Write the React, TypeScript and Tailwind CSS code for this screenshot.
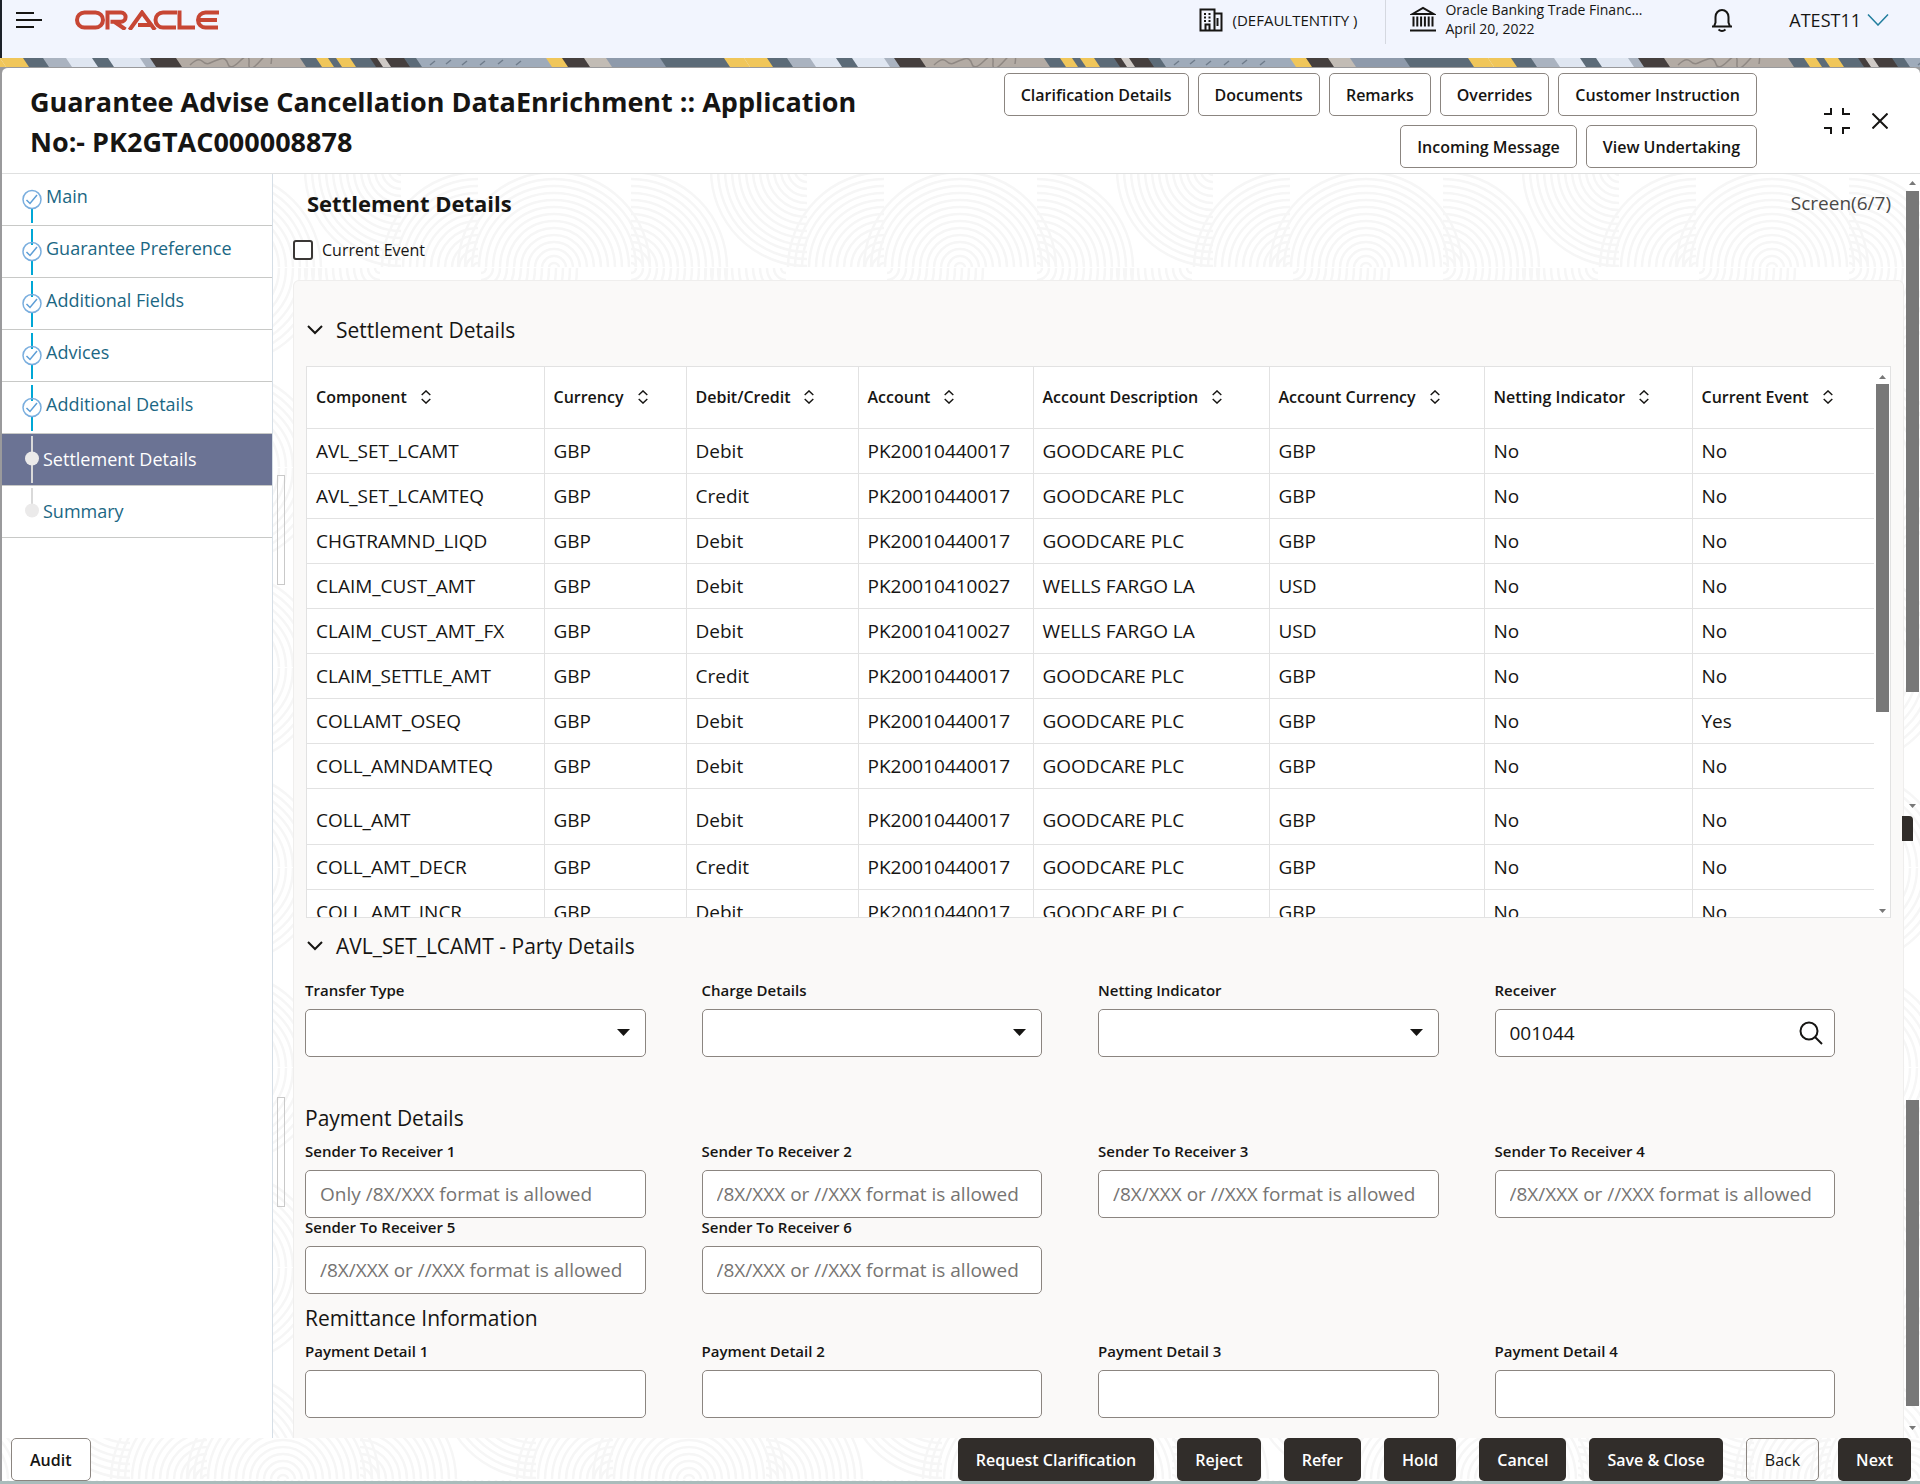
import React from 'react';

type StepState = 'done' | 'current' | 'todo';

interface Step {
  label: string;
  state: StepState;
}

const steps: Step[] = [
  { label: 'Main', state: 'done' },
  { label: 'Guarantee Preference', state: 'done' },
  { label: 'Additional Fields', state: 'done' },
  { label: 'Advices', state: 'done' },
  { label: 'Additional Details', state: 'done' },
  { label: 'Settlement Details', state: 'current' },
  { label: 'Summary', state: 'todo' },
];

const columns = [
  { label: 'Component', width: 'w-[237px]' },
  { label: 'Currency', width: 'w-[142px]' },
  { label: 'Debit/Credit', width: 'w-[172px]' },
  { label: 'Account', width: 'w-[175px]' },
  { label: 'Account Description', width: 'w-[236px]' },
  { label: 'Account Currency', width: 'w-[215px]' },
  { label: 'Netting Indicator', width: 'w-[208px]' },
  { label: 'Current Event', width: 'w-[183px]' },
];

const rows = [
  ['AVL_SET_LCAMT', 'GBP', 'Debit', 'PK20010440017', 'GOODCARE PLC', 'GBP', 'No', 'No'],
  ['AVL_SET_LCAMTEQ', 'GBP', 'Credit', 'PK20010440017', 'GOODCARE PLC', 'GBP', 'No', 'No'],
  ['CHGTRAMND_LIQD', 'GBP', 'Debit', 'PK20010440017', 'GOODCARE PLC', 'GBP', 'No', 'No'],
  ['CLAIM_CUST_AMT', 'GBP', 'Debit', 'PK20010410027', 'WELLS FARGO LA', 'USD', 'No', 'No'],
  ['CLAIM_CUST_AMT_FX', 'GBP', 'Debit', 'PK20010410027', 'WELLS FARGO LA', 'USD', 'No', 'No'],
  ['CLAIM_SETTLE_AMT', 'GBP', 'Credit', 'PK20010440017', 'GOODCARE PLC', 'GBP', 'No', 'No'],
  ['COLLAMT_OSEQ', 'GBP', 'Debit', 'PK20010440017', 'GOODCARE PLC', 'GBP', 'No', 'Yes'],
  ['COLL_AMNDAMTEQ', 'GBP', 'Debit', 'PK20010440017', 'GOODCARE PLC', 'GBP', 'No', 'No'],
  ['COLL_AMT', 'GBP', 'Debit', 'PK20010440017', 'GOODCARE PLC', 'GBP', 'No', 'No'],
  ['COLL_AMT_DECR', 'GBP', 'Credit', 'PK20010440017', 'GOODCARE PLC', 'GBP', 'No', 'No'],
  ['COLL_AMT_INCR', 'GBP', 'Debit', 'PK20010440017', 'GOODCARE PLC', 'GBP', 'No', 'No'],
];

const headerActions = [
  'Clarification Details',
  'Documents',
  'Remarks',
  'Overrides',
  'Customer Instruction',
  'Incoming Message',
  'View Undertaking',
];

const footerActions = ['Request Clarification', 'Reject', 'Refer', 'Hold', 'Cancel', 'Save & Close'];

const ANY_FORMAT = '/8X/XXX or //XXX format is allowed';

const radii = Array.from({ length: 14 }, (_, i) => 5 + i * 7);

// [centre x, centre y, clip x, clip y, clip width] of each set of rings in a 406x200 tile
const ringSets: [number, number, number, number, number][] = [
  [0, 100, 0, 0, 100],
  [406, 100, 306, 0, 100],
  [77, 100, 77, 0, 100],
  [253, 2, 153, 0, 100],
  [330, 100, 230, 0, 100],
  [333, 100, 333, 100, 73],
  [-73, 100, 0, 100, 30],
  [77, 100, 77, 100, 100],
  [232, 100, 150, 100, 82],
];

// Embossed arches that repeat behind the content and the footer
const Ripples: React.FC<{ id: string; top: number }> = ({ id, top }) => (
  <svg className="pointer-events-none absolute inset-0 h-full w-full" aria-hidden="true">
    <defs>
      {ringSets.map(([, , x, y, w], i) => (
        <clipPath key={i} id={`${id}-${i}`}>
          <rect x={x} y={y} width={w} height="99" />
        </clipPath>
      ))}
      <pattern id={id} width="406" height="200" x="281" y={top} patternUnits="userSpaceOnUse">
        <g fill="none" stroke="#f6f6f6" strokeWidth="2.5">
          {ringSets.map(([cx, cy], i) => (
            <g key={i} clipPath={`url(#${id}-${i})`}>
              {radii.map((r) => <circle key={r} cx={cx} cy={cy} r={r} />)}
            </g>
          ))}
        </g>
      </pattern>
    </defs>
    <rect width="100%" height="100%" fill={`url(#${id})`} />
  </svg>
);

const bannerShapes: [string, number, number][] = [
  ['#f0c65a', 0, 23], ['#5c6b78', 23, 43], ['#aab3c0', 43, 66], ['#dfe6f1', 66, 92], ['#5c6b78', 92, 108],
  ['#dfe6f1', 108, 140], ['#aab3c0', 140, 150], ['#453f3e', 150, 176], ['#b3aba4', 176, 300],
  ['#5c6b78', 300, 316], ['#f0c65a', 316, 328], ['#5c6b78', 328, 336], ['#f0c65a', 336, 350],
  ['#5c6b78', 350, 370], ['#453f3e', 370, 377], ['#cfcac6', 377, 385], ['#453f3e', 385, 404],
  ['#5c6b78', 404, 416], ['#9fabba', 416, 546], ['#f0c65a', 546, 562], ['#453f3e', 562, 584],
  ['#c2bcb5', 584, 606], ['#8e9aab', 606, 660], ['#5c6b78', 660, 724], ['#f0c65a', 724, 744],
];

const Banner = () => (
  <svg className="block h-[9px] w-full" aria-hidden="true">
    <defs>
      <pattern id="banner" width="744" height="9" patternUnits="userSpaceOnUse">
        {bannerShapes.map(([fill, a, b]) => (
          <path key={a} fill={fill} d={`M${a} 0H${b + 1}L${b + 7} 9H${a + 6}Z`} />
        ))}
        <path d="M0 0L6 9H0Z" fill="#f0c65a" />
        <path d="M190 7q8-8 12-4t8 2 10-4 8 5 12-3 9 2 12-3 10 4" fill="none" stroke="#8f8883" strokeWidth="1.5" />
        <path d="M430 7l5-4M446 6l5-4M462 7l5-4M480 7l5-4M498 6l5-4M516 7l5-4" stroke="#6f7c8b" strokeWidth="1.5" />
      </pattern>
    </defs>
    <rect width="100%" height="9" fill="url(#banner)" />
  </svg>
);

const OracleLogo = () => (
  <svg className="h-5 w-[145px]" viewBox="75 10 145 19" role="img" aria-label="Oracle">
    <g fill="none" stroke="#c74634" strokeWidth="4">
      <rect x="77" y="12" width="26" height="15" rx="7.5" />
      <path d="M107.5 29V12H121a4.6 4.6 0 0 1 0 9.2h-10.500M114 21l11.500 8" />
      <path d="M129.500 29.500L142 12l13 17.500M138 24.500h12" />
      <path d="M177 12h-14a7.500 7.500 0 0 0 0 15h13" />
      <path d="M179.500 10v17H195" />
      <path d="M219 12h-13.500a7.500 7.500 0 0 0 0 15H218M199 19.500h18" />
    </g>
  </svg>
);

const TopBar = () => (
  <header className="flex h-[58px] items-start justify-between border-l-2 border-[#1c2129] bg-[#f2f5fe] pr-[31px] pl-[14px]">
    <div className="flex h-10 items-center gap-[33px]">
      <button type="button" aria-label="Open menu">
        <svg className="h-5 w-[26px]" viewBox="0 0 26 20" stroke="#161513" strokeWidth="2">
          <path d="M0 3h18M0 10h26M0 17h18" />
        </svg>
      </button>
      <OracleLogo />
    </div>

    <div className="flex items-start">
      <div className="flex h-10 items-center gap-[10px] pr-7">
        <svg className="size-6" viewBox="0 0 24 24" fill="none" stroke="#161513" strokeWidth="2">
          <path d="M1.500 1.500h14v21h-14zM15.500 5.500h7v17h-7" />
          <path d="M6.500 22v-5.500h4V22" />
          <path d="M5 6h2M9.500 6h2M5 9.500h2M9.500 9.500h2M5 13h2M9.500 13h2M18.500 10v8" />
        </svg>
        <span className="text-[15px] leading-5">(DEFAULTENTITY )</span>
      </div>
      <div className="flex h-11 items-center gap-[9px] border-l border-[#d5d8e0] pr-[69px] pb-[6px] pl-6">
        <svg className="size-[26px]" viewBox="0 0 26 26" fill="none" stroke="#161513" strokeWidth="2">
          <path d="M2.500 8L13 2l10.500 6z" />
          <path d="M3.500 10.500v10M7.300 10.500v10M11.100 10.500v10M14.900 10.500v10M18.700 10.500v10M22.500 10.500v10" />
          <path d="M0 24.500h26" />
        </svg>
        <div className="text-[14px] leading-[19px]">
          <div>Oracle Banking Trade Financ…</div>
          <div>April 20, 2022</div>
        </div>
      </div>
      <div className="flex h-10 items-center">
        <button type="button" aria-label="Notifications">
          <svg className="h-[25px] w-[22px]" viewBox="0 0 22 25" fill="none" stroke="#161513" strokeWidth="2">
            <path d="M1 18.500h20M3 18.500l1.500-4V9a6.500 7 0 0 1 13 0v5.500l1.500 4M7.500 21.500q3.500 3 7 0" />
          </svg>
        </button>
        <button type="button" className="ml-14 flex items-center gap-[6px] text-[18px] leading-6">
          ATEST11
          <svg className="h-3 w-[22px]" viewBox="0 0 22 12" fill="none" stroke="#227e9e" strokeWidth="1.500">
            <path d="M1 .5l10 10.500L21 .5" />
          </svg>
        </button>
      </div>
    </div>
  </header>
);

const TitleBar = () => (
  <div className="flex min-h-[106px] justify-between border-b border-[#dfe0e0] pr-8 pl-7">
    <h1 className="max-w-[860px] pt-[14px] text-[27px] leading-10 font-bold">
      Guarantee Advise Cancellation DataEnrichment :: Application No:- PK2GTAC000008878
    </h1>
    <div className="flex items-center">
      <div className="flex max-w-[780px] flex-wrap justify-end gap-[9px]">
        {headerActions.map((label) => (
          <button
            key={label}
            type="button"
            className="h-[43px] rounded-[5px] border border-[#8b8580] bg-white px-4 text-[16px] leading-5 font-semibold"
          >
            {label}
          </button>
        ))}
      </div>
      <button type="button" aria-label="Collapse" className="ml-[67px]">
        <svg className="size-[26px]" viewBox="0 0 26 26" fill="none" stroke="#161513" strokeWidth="2">
          <path d="M0 6h7V0M26 6h-7V0M0 20h7v6M26 20h-7v6" />
        </svg>
      </button>
      <button type="button" aria-label="Close" className="ml-[22px]">
        <svg className="size-4" viewBox="0 0 16 16" fill="none" stroke="#161513" strokeWidth="2">
          <path d="M.5.5l15 15M15.500.5l-15 15" />
        </svg>
      </button>
    </div>
  </div>
);

const StepMarker: React.FC<{ state: StepState; first: boolean }> = ({ state, first }) => {
  if (state === 'done') {
    return (
      <svg className="h-[51px] w-5" viewBox="0 0 20 51" fill="none">
        <path d={first ? 'M10 35v14' : 'M10 3v16M10 35v14'} stroke="#00a7d6" strokeWidth="2" />
        <circle cx="10" cy="25.500" r="9" stroke="#7aaede" strokeWidth="1.500" />
        <path d="M4.500 26l3.500 3.500 7-8.500" stroke="#5e9ed6" strokeWidth="1.500" />
      </svg>
    );
  }
  return (
    <svg className="h-[51px] w-5" viewBox="0 0 20 51" fill="none">
      <path d={state === 'current' ? 'M10 2v47' : 'M10 2v20'} stroke="#d9d9d9" strokeWidth="2" />
      <circle cx="10" cy="24.500" r="7" fill="#ebeaea" />
    </svg>
  );
};

const Sidebar = () => (
  <nav className="w-[271px] shrink-0 border-r border-[#d5dee6] bg-white text-[18px] leading-6">
    {steps.map(({ label, state }, i) => (
      <a
        key={label}
        href="#"
        className={`flex h-[52px] items-center border-b border-[#c8c9c7] pl-5 ${
          state === 'current' ? 'bg-[#6b7394] text-white' : 'text-[#1b6784]'
        }`}
      >
        <StepMarker state={state} first={i === 0} />
        <span className={state === 'done' ? 'pb-[7px] pl-1' : 'pb-px pl-px'}>{label}</span>
      </a>
    ))}
  </nav>
);

const SortIcon = () => (
  <svg className="h-[14px] w-[10px] shrink-0" viewBox="0 0 10 14" fill="none" stroke="#161513" strokeWidth="1.400">
    <path d="M.7 5L5 .9 9.300 5M.7 9L5 13.100 9.300 9" />
  </svg>
);

const Arrow: React.FC<{ down?: boolean }> = ({ down }) => (
  <svg className="h-1 w-[7px]" viewBox="0 0 7 4" fill="#787878">
    <path d={down ? 'M0 0h7L3.500 4z' : 'M0 4h7L3.500 0z'} />
  </svg>
);

const SectionHeading: React.FC<{ children: React.ReactNode }> = ({ children }) => (
  <h3 className="flex items-center gap-3 pl-px text-[21px] leading-[30px] font-medium">
    <svg className="h-[10px] w-[18px]" viewBox="0 0 18 10" fill="none" stroke="#161513" strokeWidth="2">
      <path d="M2 1l7 7 7-7" />
    </svg>
    {children}
  </h3>
);

const SettlementTable = () => (
  <div className="flex h-[552px] overflow-hidden border border-[#e2e2e2] bg-white">
    <div className="min-w-0 flex-1 overflow-hidden">
      <table className="w-full table-fixed border-collapse text-left">
        <thead>
          <tr className="h-[61px] border-b border-[#e2e2e2]">
            {columns.map(({ label, width }, i) => (
              <th key={label} className={`${width} px-[9px] text-[16px] leading-5 font-semibold whitespace-nowrap ${i < 7 ? 'border-r border-[#e2e2e2]' : ''}`}>
                <span className="flex items-center gap-[14px]">
                  {label}
                  <SortIcon />
                </span>
              </th>
            ))}
          </tr>
        </thead>
        <tbody className="text-[19px] leading-6">
          {rows.map((row) => (
            <tr key={row[0]} className={`border-b border-[#e2e2e2] ${row[0] === 'COLL_AMT' ? 'h-14' : 'h-[45px]'}`}>
              {row.map((cell, i) => (
                <td
                  key={i}
                  className={`px-[9px] whitespace-nowrap ${row[0] === 'COLL_AMT' ? 'pt-2' : ''} ${i < 7 ? 'border-r border-[#e2e2e2]' : ''}`}
                >
                  {cell}
                </td>
              ))}
            </tr>
          ))}
        </tbody>
      </table>
    </div>
    <div className="flex w-4 flex-col items-center pt-2 pb-1">
      <Arrow />
      <div className="mt-[5px] h-[328px] w-[13px] bg-[#787878]" />
      <div className="mt-auto flex"><Arrow down /></div>
    </div>
  </div>
);

const boxStyle = 'h-12 w-full rounded-[5px] border border-[#8b8580] bg-white px-[14px] text-[19px] leading-6';

interface FieldProps {
  id: string;
  label: string;
  children?: React.ReactNode;
  placeholder?: string;
}

const Field: React.FC<FieldProps> = ({ id, label, children, placeholder }) => (
  <div className="flex flex-col gap-[9px]">
    <label htmlFor={id} className="text-[15px] leading-[19px] font-semibold">{label}</label>
    {children ?? (
      <input id={id} type="text" placeholder={placeholder} className={`${boxStyle} placeholder:text-[#767472]`} />
    )}
  </div>
);

const SelectField: React.FC<{ id: string; label: string }> = ({ id, label }) => (
  <Field id={id} label={label}>
    <div className="relative">
      <select id={id} defaultValue="" className={`${boxStyle} block appearance-none`}>
        <option value=""></option>
      </select>
      <svg className="pointer-events-none absolute top-5 right-4 h-[7px] w-[13px]" viewBox="0 0 13 7" fill="#161513">
        <path d="M0 0h13L6.500 7z" />
      </svg>
    </div>
  </Field>
);

const fieldGrid = 'grid grid-cols-4 gap-x-14 pr-14';

const PageScroll = () => (
  <div className="relative flex w-4 shrink-0 flex-col items-center pt-[7px] pb-2">
    <Arrow />
    <div className="mt-[6px] h-[501px] w-[13px] bg-[#787878]" />
    <div className="mt-[112px] flex"><Arrow down /></div>
    <div className="mt-2 mr-[10px] h-[25px] w-[11px] rounded-tr bg-[#312d2a]" />
    <div className="mt-auto h-[306px] w-[13px] bg-[#787878]" />
    <div className="mt-5 flex"><Arrow down /></div>
  </div>
);

const Footer = () => (
  <footer className="relative flex items-center justify-between bg-white pr-[9px] pl-[9px] text-[16px] leading-5 font-semibold">
    <Ripples id="ripples-footer" top={-58} />
    <button type="button" className="relative h-[43px] rounded-[5px] border border-[#8b8580] bg-white px-[18px]">
      Audit
    </button>
    <div className="relative flex gap-[23px]">
      {footerActions.map((label) => (
        <button key={label} type="button" className="h-[43px] rounded-[5px] bg-[#312d2a] px-[18px] text-white">
          {label}
        </button>
      ))}
      <div className="flex gap-[19px]">
        <button type="button" className="h-[43px] rounded-[5px] border border-[#8b8580] px-[18px] font-medium">Back</button>
        <button type="button" className="h-[43px] rounded-[5px] bg-[#312d2a] px-[18px] text-white">Next</button>
      </div>
    </div>
  </footer>
);

export default function App() {
  return (
    <div className="flex min-h-screen flex-col bg-[#f2f5fe] font-['Open_Sans',sans-serif] text-[#161513]">
      <TopBar />
      <Banner />

      <div className="flex flex-1 flex-col border-b-[3px] border-[#a9bcbb] bg-[#9a9a9c] pl-[2px]">
        <div className="flex flex-1 flex-col rounded-t-[6px] border-t border-[#9a9a9c] bg-white">
          <TitleBar />
          <div className="flex flex-1">
            <Sidebar />
            <div className="relative flex min-w-0 flex-1">
              <Ripples id="ripples-main" top={-6} />

              <div className="relative flex w-5 shrink-0 flex-col items-center pr-1">
                <div className="mt-[301px] h-[110px] w-2 border border-[#c9c9c9]" />
                <div className="mt-[512px] h-[110px] w-2 border border-[#c9c9c9]" />
              </div>

              <main className="relative flex min-w-0 flex-1 flex-col">
                <div className="flex items-center justify-between pt-[13px] pr-[13px] pl-[14px]">
                  <h2 className="text-[22px] leading-8 font-bold">Settlement Details</h2>
                  <span className="text-[19px] leading-6 text-[#4a4846]">Screen(6/7)</span>
                </div>
                <div className="mt-[21px] mb-5 flex items-center gap-[9px]">
                  <input id="current-event" type="checkbox" className="size-5 appearance-none rounded-[3px] border-2 border-[#3a3735] bg-white" />
                  <label htmlFor="current-event" className="text-[16px] leading-5 font-medium">Current Event</label>
                </div>

                <section className="flex-1 rounded-t-[6px] border border-b-0 border-[#efeeed] bg-[#faf9f8] pt-[34px] pr-3 pb-4 pl-[11px]">
                  <SectionHeading>Settlement Details</SectionHeading>
                  <div className="mt-[21px] pl-px">
                    <SettlementTable />
                  </div>

                  <div className="mt-[13px] mb-5">
                    <SectionHeading>AVL_SET_LCAMT - Party Details</SectionHeading>
                  </div>
                  <div className={fieldGrid}>
                    <SelectField id="transfer-type" label="Transfer Type" />
                    <SelectField id="charge-details" label="Charge Details" />
                    <SelectField id="netting-indicator" label="Netting Indicator" />
                    <Field id="receiver" label="Receiver">
                      <div className="relative">
                        <input id="receiver" type="text" defaultValue="001044" className={`${boxStyle} block`} />
                        <button type="button" aria-label="Search receiver" className="absolute top-3 right-3">
                          <svg className="size-6" viewBox="0 0 24 24" fill="none" stroke="#161513" strokeWidth="2">
                            <circle cx="10" cy="10" r="8.500" />
                            <path d="M16 16l7 7" />
                          </svg>
                        </button>
                      </div>
                    </Field>
                  </div>

                  <h3 className="mt-[46px] mb-[9px] text-[21px] leading-[30px] font-medium">Payment Details</h3>
                  <div className={fieldGrid}>
                    <Field id="sender-1" label="Sender To Receiver 1" placeholder="Only /8X/XXX format is allowed" />
                    {[2, 3, 4, 5, 6].map((n) => (
                      <Field key={n} id={`sender-${n}`} label={`Sender To Receiver ${n}`} placeholder={ANY_FORMAT} />
                    ))}
                  </div>

                  <h3 className="mt-[9px] mb-[9px] text-[21px] leading-[30px] font-medium">Remittance Information</h3>
                  <div className={fieldGrid}>
                    {[1, 2, 3, 4].map((n) => (
                      <Field key={n} id={`payment-${n}`} label={`Payment Detail ${n}`} />
                    ))}
                  </div>
                </section>
              </main>

              <PageScroll />
            </div>
          </div>
          <Footer />
        </div>
      </div>
    </div>
  );
}
